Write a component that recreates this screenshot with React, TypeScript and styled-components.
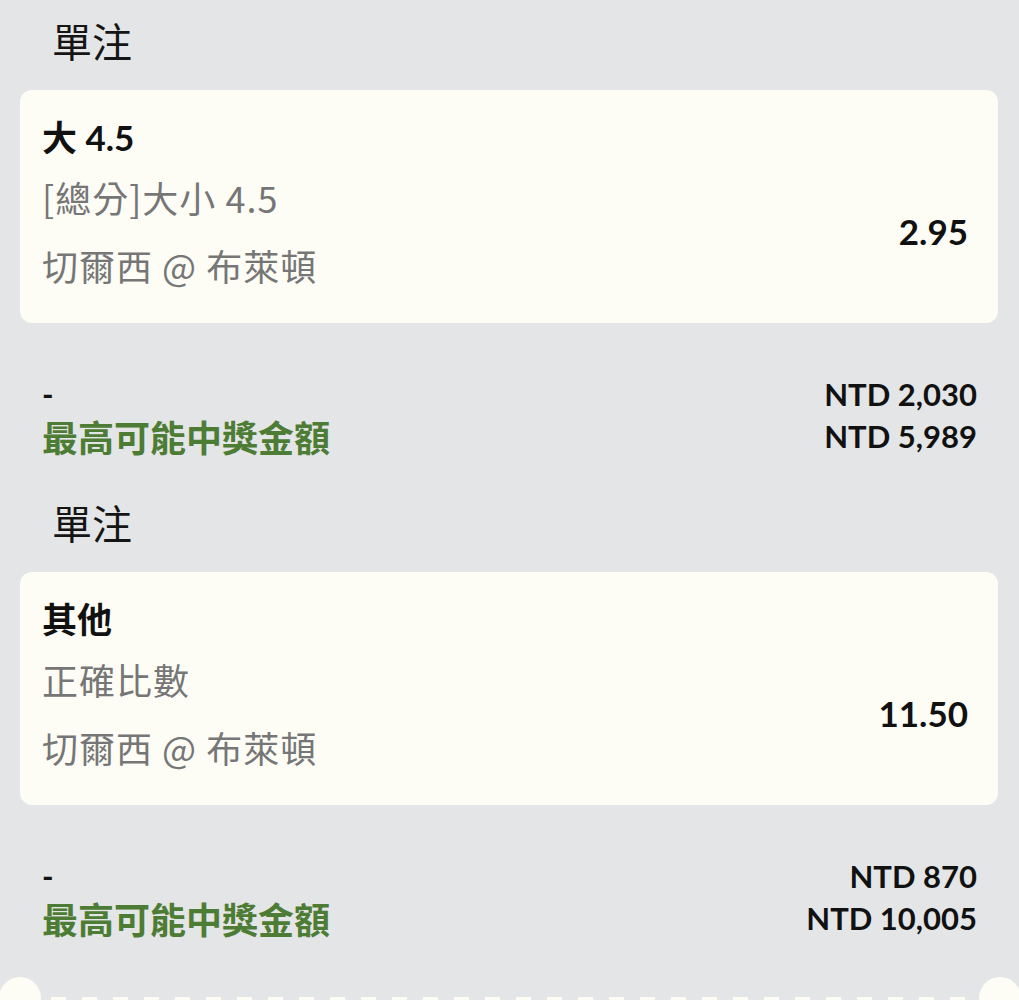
import React from "react";
import styled, { createGlobalStyle } from "styled-components";

const GlobalStyle = createGlobalStyle`
  html, body {
    margin: 0;
    padding: 0;
    background: #e4e5e7;
  }
  body {
    font-family: Lato, "Noto Sans CJK TC", sans-serif;
  }
`;

const Page = styled.div`
  background: #e4e5e7;
  min-height: 1000px;
  overflow: hidden;
`;

const Section = styled.section`
  display: flex;
  flex-direction: column;
`;

const SectionTitle = styled.div`
  font-family: "Noto Sans CJK TC", sans-serif;
  font-size: 40px;
  line-height: 80px;
  color: #151515;
  padding-left: 52px;
`;

const Card = styled.div`
  margin: 10px 21px 0 20px;
  padding: 22px 30px 25px 22px;
  background: #fdfdf6;
  border-radius: 12px;
  display: flex;
  align-items: center;
  justify-content: space-between;
`;

const Info = styled.div`
  display: flex;
  flex-direction: column;
`;

const Selection = styled.div`
  font-size: 35px;
  font-weight: 700;
  line-height: 50px;
  color: #111;
`;

const Detail = styled.div<{ $lh: number }>`
  font-family: "Noto Sans CJK TC", sans-serif;
  font-size: 36px;
  letter-spacing: 1px;
  line-height: ${(p) => p.$lh}px;
  color: #767676;
`;

const Odds = styled.div`
  font-size: 35px;
  font-weight: 700;
  color: #111;
  margin-top: 52px;
`;

const Summary = styled.div`
  padding: 50px 42px 25px 42px;
  display: flex;
  flex-direction: column;
`;

const SummaryRow = styled.div`
  display: flex;
  justify-content: space-between;
  align-items: center;
  height: 42px;
`;

const Status = styled.span`
  font-size: 31px;
  font-weight: 700;
  color: #111;
`;

const WinLabel = styled.span`
  font-size: 36px;
  font-weight: 700;
  color: #4d7c34;
`;

const Amount = styled.span`
  font-size: 31px;
  font-weight: 700;
  color: #111;
`;

const Perforation = styled.div`
  margin-top: 13px;
  display: flex;
  align-items: center;
  gap: 10px;
`;

const Notch = styled.div<{ $side: "left" | "right" }>`
  width: 42px;
  height: 42px;
  border-radius: 50%;
  background: #fdfdf6;
  flex: none;
  margin-left: ${(p) => (p.$side === "left" ? "-1px" : "2px")};
  margin-right: ${(p) => (p.$side === "right" ? "-2px" : "0")};
`;

const DashLine = styled.div`
  flex: 1;
  height: 6px;
  margin-top: 4px;
  background: repeating-linear-gradient(
    to right,
    #fdfdf6 0,
    #fdfdf6 15px,
    transparent 15px,
    transparent 31px
  );
`;

type Bet = {
  selection: string;
  market: string;
  match: string;
  odds: string;
  stake: string;
  win: string;
};

const bets: Bet[] = [
  {
    selection: "大 4.5",
    market: "[總分]大小 4.5",
    match: "切爾西 @ 布萊頓",
    odds: "2.95",
    stake: "NTD 2,030",
    win: "NTD 5,989",
  },
  {
    selection: "其他",
    market: "正確比數",
    match: "切爾西 @ 布萊頓",
    odds: "11.50",
    stake: "NTD 870",
    win: "NTD 10,005",
  },
];

export default function App() {
  return (
    <Page>
      <GlobalStyle />
      {bets.map((b, i) => (
        <Section key={i}>
          <SectionTitle>單注</SectionTitle>
          <Card>
            <Info>
              <Selection>{b.selection}</Selection>
              <Detail $lh={70}>{b.market}</Detail>
              <Detail $lh={66}>{b.match}</Detail>
            </Info>
            <Odds>{b.odds}</Odds>
          </Card>
          <Summary>
            <SummaryRow>
              <Status>-</Status>
              <Amount>{b.stake}</Amount>
            </SummaryRow>
            <SummaryRow>
              <WinLabel>最高可能中獎金額</WinLabel>
              <Amount>{b.win}</Amount>
            </SummaryRow>
          </Summary>
        </Section>
      ))}
      <Perforation>
        <Notch $side="left" />
        <DashLine />
        <Notch $side="right" />
      </Perforation>
    </Page>
  );
}
